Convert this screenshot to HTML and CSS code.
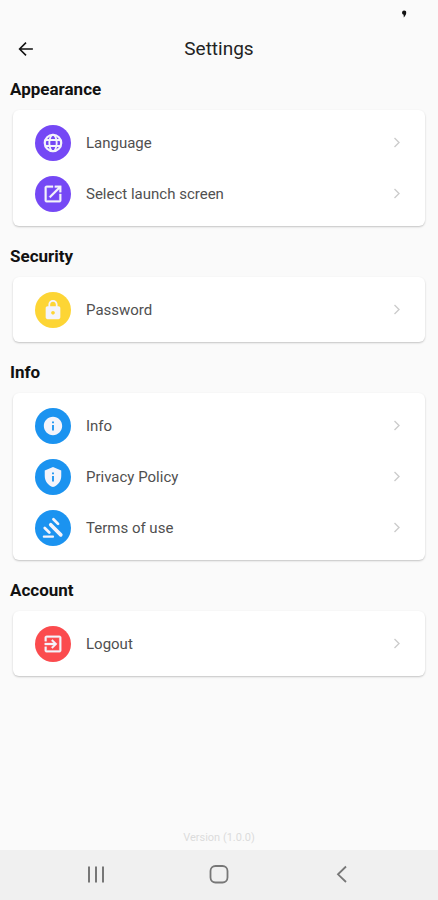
FILE: index.html
```html
<!DOCTYPE html>
<html lang="en">
<head>
<meta charset="utf-8">
<meta name="viewport" content="width=device-width, initial-scale=1">
<title>Settings</title>
<link rel="stylesheet" href="styles.css">
</head>
<body>
<svg class="sprite" aria-hidden="true">
  <symbol id="chevron" viewBox="0 0 24 24"><path d="M9.500 7l4.500 4.500-4.500 4.500" fill="none" stroke="currentColor" stroke-width="1.4"/></symbol>
</svg>
<div class="status"><svg class="status-mark" viewBox="0 0 6 8" aria-hidden="true"><path d="M3 0.5a2.200 2.200 0 0 1 2.200 2.400C5.200 4.500 4 6 2.800 7.500L2.600 4.800A2.200 2.200 0 0 1 3 .5z" fill="currentColor"/></svg></div>
<header class="topbar">
  <button class="back" aria-label="Back"><svg class="icon" viewBox="0 0 24 24"><path d="M19.5 12H5.5M12 5L5 12l7 7" fill="none" stroke="currentColor" stroke-width="1.7"/></svg></button>
  <h1 class="title">Settings</h1>
</header>
<main class="content">
  <section>
    <h2 class="heading">Appearance</h2>
    <div class="card">
      <a class="row" href="#language"><span class="badge purple"><svg class="icon" viewBox="0 0 24 24"><g fill="none" stroke="currentColor"><circle cx="12" cy="12" r="9" stroke-width="2.400"/><ellipse cx="12" cy="12" rx="4" ry="9" stroke-width="2"/><path d="M4 8.700h16M4 15.300h16" stroke-width="2"/></g></svg></span><span class="label">Language</span><svg class="chevron"><use href="#chevron"/></svg></a>
      <a class="row" href="#launch"><span class="badge purple"><svg class="icon" viewBox="0 0 24 24"><path fill="currentColor" stroke="currentColor" stroke-width=".4" d="M19 19H5V5h7V3H5c-1.11 0-2 .9-2 2v14c0 1.1.89 2 2 2h14c1.1 0 2-.9 2-2v-7h-2v7zM14 3v2h3.59l-9.83 9.83 1.41 1.41L19 6.41V10h2V3h-7z"/></svg></span><span class="label">Select launch screen</span><svg class="chevron"><use href="#chevron"/></svg></a>
    </div>
  </section>
  <section>
    <h2 class="heading">Security</h2>
    <div class="card">
      <a class="row" href="#password"><span class="badge yellow"><svg class="icon" viewBox="0 0 24 24"><path fill="currentColor" d="M18 8h-1V6c0-2.76-2.24-5-5-5S7 3.24 7 6v2H6c-1.1 0-2 .9-2 2v10c0 1.1.9 2 2 2h12c1.1 0 2-.9 2-2V10c0-1.1-.9-2-2-2zm-6 9c-1.1 0-2-.9-2-2s.9-2 2-2 2 .9 2 2-.9 2-2 2zm3.1-9H8.9V6c0-1.71 1.39-3.1 3.1-3.1s3.1 1.39 3.1 3.1v2z"/></svg></span><span class="label">Password</span><svg class="chevron"><use href="#chevron"/></svg></a>
    </div>
  </section>
  <section>
    <h2 class="heading">Info</h2>
    <div class="card">
      <a class="row" href="#info"><span class="badge blue"><svg class="icon" viewBox="0 0 24 24"><path fill="currentColor" d="M12 2C6.48 2 2 6.48 2 12s4.48 10 10 10 10-4.48 10-10S17.52 2 12 2zm1 15h-2v-6h2v6zm0-8h-2V7h2v2z"/></svg></span><span class="label">Info</span><svg class="chevron"><use href="#chevron"/></svg></a>
      <a class="row" href="#privacy"><span class="badge blue"><svg class="icon" viewBox="0 0 24 24"><path fill="currentColor" d="M12 1L3 5v6c0 5.55 3.84 10.74 9 12 5.16-1.26 9-6.45 9-12V5l-9-4zm1 16h-2v-6h2v6zm0-8h-2V7h2v2z"/></svg></span><span class="label">Privacy Policy</span><svg class="chevron"><use href="#chevron"/></svg></a>
      <a class="row" href="#terms"><span class="badge blue"><svg class="icon" viewBox="0 0 24 24"><g fill="none" stroke="currentColor" stroke-linecap="round"><path d="M12.500 2.500l5 5M3 12l5 5" stroke-width="3"/><path d="M9.500 8.500L20.500 19.500" stroke-width="4"/><path d="M2 21.500h10" stroke-width="2.400"/></g></svg></span><span class="label">Terms of use</span><svg class="chevron"><use href="#chevron"/></svg></a>
    </div>
  </section>
  <section>
    <h2 class="heading">Account</h2>
    <div class="card">
      <a class="row" href="#logout"><span class="badge red"><svg class="icon" viewBox="0 0 24 24"><path fill="currentColor" stroke="currentColor" stroke-width=".4" d="M10.09 15.59L11.5 17l5-5-5-5-1.41 1.41L12.67 11H3v2h9.67l-2.58 2.59zM19 3H5c-1.11 0-2 .9-2 2v4h2V5h14v14H5v-4H3v4c0 1.1.89 2 2 2h14c1.1 0 2-.9 2-2V5c0-1.1-.9-2-2-2z"/></svg></span><span class="label">Logout</span><svg class="chevron"><use href="#chevron"/></svg></a>
    </div>
  </section>
</main>
<p class="version">Version (1.0.0)</p>
<nav class="navbar" aria-label="System">
  <button aria-label="Recent apps"><svg class="icon" viewBox="0 0 24 24"><path d="M5 3.500v16M12 3.500v16M19 3.500v16" fill="none" stroke="currentColor" stroke-width="2"/></svg></button>
  <button aria-label="Home"><svg class="icon" viewBox="0 0 24 24"><rect x="3.500" y="3" width="17" height="16.500" rx="5" fill="none" stroke="currentColor" stroke-width="1.800"/></svg></button>
  <button aria-label="Go back"><svg class="icon" viewBox="0 0 24 24"><path d="M16 3.500L8 11.300l8 7.700" fill="none" stroke="currentColor" stroke-width="1.800"/></svg></button>
</nav>
</body>
</html>
```
FILE: styles.css
```css
* { box-sizing: border-box; }
body {
  margin: 0;
  min-height: 100vh;
  display: flex;
  flex-direction: column;
  background: #fafafa;
  color: #111;
  font-family: Roboto, "Noto Sans", sans-serif;
}
h1, h2, p { margin: 0; }
button {
  padding: 0;
  border: 0;
  background: none;
  color: inherit;
  display: grid;
  place-items: center;
}
.sprite { position: absolute; width: 0; height: 0; }
.icon { display: block; width: 24px; height: 24px; }
.status {
  height: 24px;
  display: flex;
  align-items: center;
  justify-content: flex-end;
  padding: 4px 31px 0 0;
}
.status-mark { width: 6px; height: 8px; }
.topbar {
  display: grid;
  grid-template-columns: 52px 1fr 52px;
  align-items: center;
  height: 50px;
}
.back { height: 48px; }
.back .icon { width: 22px; height: 22px; }
.title {
  text-align: center;
  font-size: 19px;
  line-height: 24px;
  font-weight: 400;
  color: #222;
}
.content {
  flex: 1;
  display: flex;
  flex-direction: column;
  gap: 18px;
  padding: 3px 10px 0;
}
.heading {
  margin-bottom: 9px;
  font-size: 17px;
  line-height: 24px;
  font-weight: 700;
}
.card {
  margin: 0 3px;
  padding: 7px 16px 7px 22px;
  border-radius: 6px;
  background: #fff;
  box-shadow: 0 1px 2px rgba(0, 0, 0, 0.22);
}
.row {
  display: flex;
  align-items: center;
  height: 51px;
  color: #505050;
  text-decoration: none;
}
.badge {
  display: grid;
  place-items: center;
  width: 36px;
  height: 36px;
  margin-right: 15px;
  border-radius: 50%;
  color: #f4f4fb;
}
.badge .icon { width: 22px; height: 22px; }
.purple { background: #7548f5; }
.yellow { background: #fdd535; }
.blue { background: #1b93f0; }
.red { background: #fb4b4e; }
.label { flex: 1; font-size: 15px; line-height: 24px; }
.chevron { width: 24px; height: 24px; color: #ccc; }
.version {
  padding-bottom: 4px;
  text-align: center;
  font-size: 11px;
  line-height: 16px;
  color: #dcdcdc;
}
.navbar {
  display: flex;
  justify-content: center;
  height: 50px;
  background: #f0f0f0;
  color: #777;
}
.navbar button { width: 28%; height: 50px; }
```
